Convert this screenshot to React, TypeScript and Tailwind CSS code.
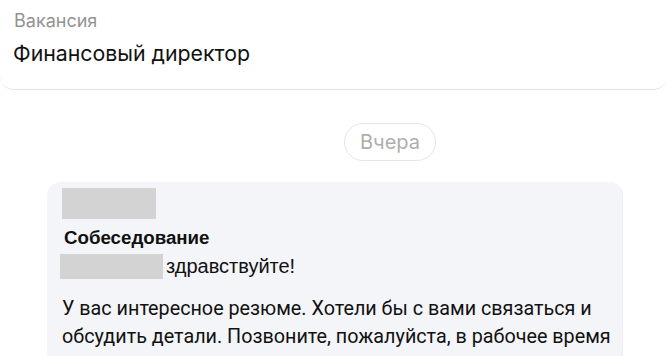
export default function App() {
  return (
    <div className="w-[667px] h-[356px] overflow-hidden bg-white" style={{ fontFamily: "Roboto, 'Noto Sans', sans-serif" }}>
      <div className="h-[90px] border-b border-[#e3e3e3] rounded-b-[14px] px-[14px] pt-[10px]">
        <div className="text-[18px] leading-[22px] text-[#939393]" style={{ fontFamily: "Inter, sans-serif" }}>Вакансия</div>
        <div className="mt-[8px] text-[21.3px] leading-[26px] text-[#111] -ml-[1px]" style={{ fontFamily: "Inter, sans-serif" }}>Финансовый директор</div>
      </div>
      <div className="flex justify-center pt-[33px] pl-[113px]">
        <div className="h-[38px] px-[15px] rounded-full border border-[#e6e6e6] flex items-center text-[20px] text-[#aeaeae]" style={{ fontFamily: "Inter, sans-serif" }}>Вчера</div>
      </div>
      <div className="ml-[47px] mr-[44px] mt-[21px] rounded-[14px] bg-[#f4f5f8] border-r border-[#ebecef] px-[15px] pt-[6px] h-[200px]">
        <div className="w-[94px] h-[31px] bg-[#d3d3d3]" />
        <div className="mt-[7px] text-[18.7px] leading-[24px] font-bold text-[#111] ml-[2px]" style={{ fontFamily: "'Liberation Sans', sans-serif" }}>Собеседование</div>
        <div className="flex items-center mt-[4px] -ml-[2px]">
          <div className="w-[103px] h-[25px] bg-[#d3d3d3]" />
          <span className="ml-[3px] text-[20px] leading-[25px] text-[#111]" style={{ fontFamily: "'Liberation Sans', sans-serif" }}>здравствуйте!</span>
        </div>
        <div className="mt-[16px] text-[19.75px] leading-[28px] text-[#111] whitespace-nowrap">
          <div>У вас интересное резюме. Хотели бы с вами связаться и</div>
          <div>обсудить детали. Позвоните, пожалуйста, в рабочее время</div>
        </div>
      </div>
    </div>
  );
}
